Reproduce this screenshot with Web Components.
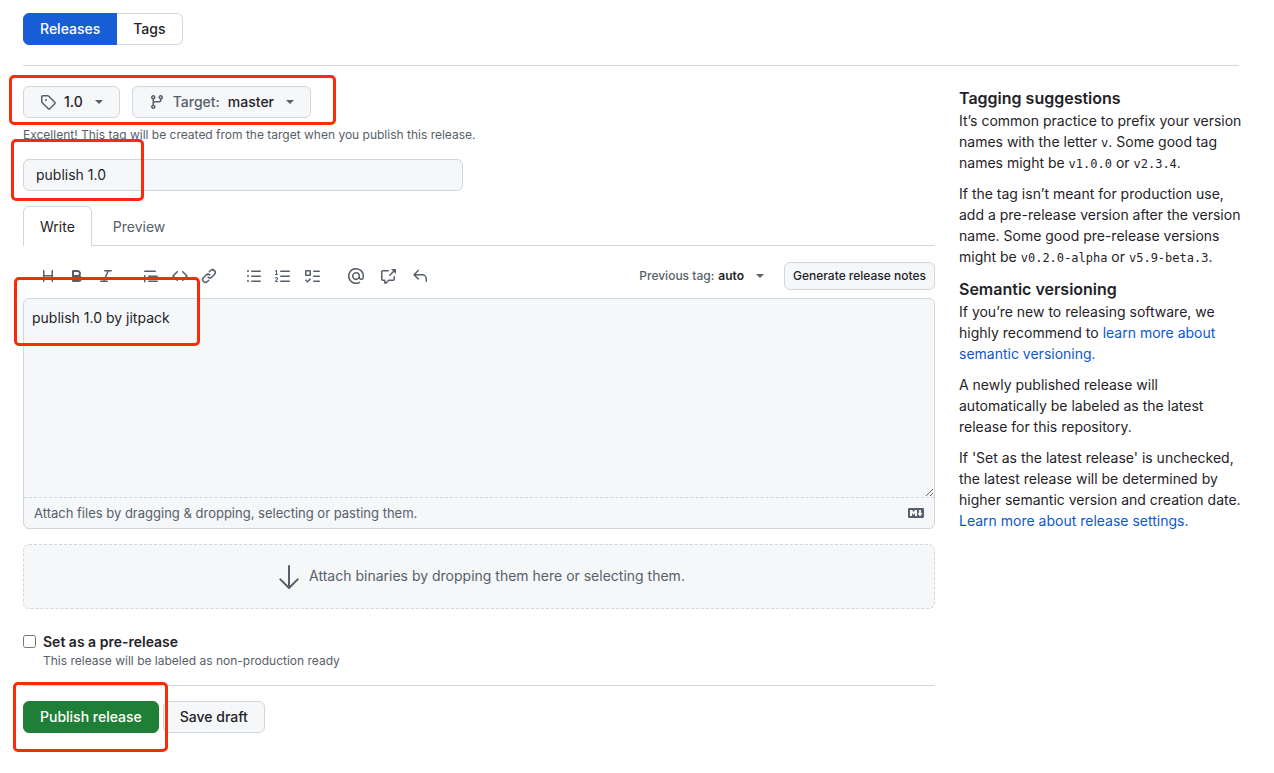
<!DOCTYPE html>
<html lang="en">
<head>
<meta charset="utf-8">
<meta name="viewport" content="width=device-width, initial-scale=1">
<title>New release</title>
<style>
  :root {
    --fg: #1f2328;
    --muted: #57606a;
    --line: #d0d7de;
    --subtle: #f5f7f9;
    --accent: #0b57d0;
    --primary: #175dd6;
    --success: #1f7f37;
    --mark: #fb2a0a;
  }
  body {
    margin: 0;
    background: #fff;
    color: var(--fg);
    font: 14px/21px Inter, "Liberation Sans", sans-serif;
  }
</style>
</head>
<body>
<release-page></release-page>

<script>
const ICONS = {
  tag: 'M1 7.775V2.75C1 1.784 1.784 1 2.75 1h5.025c.464 0 .91.184 1.238.513l6.25 6.25a1.75 1.75 0 0 1 0 2.474l-5.026 5.026a1.75 1.75 0 0 1-2.474 0l-6.25-6.25A1.752 1.752 0 0 1 1 7.775Zm1.5 0c0 .066.026.13.073.177l6.25 6.25a.25.25 0 0 0 .354 0l5.025-5.025a.25.25 0 0 0 0-.354l-6.25-6.25a.25.25 0 0 0-.177-.073H2.75a.25.25 0 0 0-.25.25ZM6 5a1 1 0 1 1 0 2 1 1 0 0 1 0-2Z',
  branch: 'M9.5 3.25a2.25 2.25 0 1 1 3 2.122V6A2.5 2.5 0 0 1 10 8.5H6a1 1 0 0 0-1 1v1.128a2.251 2.251 0 1 1-1.5 0V5.372a2.25 2.25 0 1 1 1.5 0v1.836A2.493 2.493 0 0 1 6 7h4a1 1 0 0 0 1-1v-.628A2.25 2.25 0 0 1 9.5 3.25Zm-6 0a.75.75 0 1 0 1.5 0 .75.75 0 0 0-1.5 0Zm8.25-.75a.75.75 0 1 0 0 1.5.75.75 0 0 0 0-1.5ZM4.25 12a.75.75 0 1 0 0 1.5.75.75 0 0 0 0-1.5Z',
  heading: 'M3.75 2a.75.75 0 0 1 .75.75V7h7V2.75a.75.75 0 0 1 1.5 0v10.5a.75.75 0 0 1-1.5 0V8.5h-7v4.75a.75.75 0 0 1-1.5 0V2.75A.75.75 0 0 1 3.75 2Z',
  bold: 'M4 2h4.5a3.501 3.501 0 0 1 2.852 5.53A3.499 3.499 0 0 1 9.5 14H4a1 1 0 0 1-1-1V3a1 1 0 0 1 1-1Zm1 7v3h4.5a1.5 1.5 0 0 0 0-3Zm3.5-2a1.5 1.5 0 0 0 0-3H5v3Z',
  italic: 'M6 2.75A.75.75 0 0 1 6.75 2h6.5a.75.75 0 0 1 0 1.5h-2.505l-3.858 9H9.25a.75.75 0 0 1 0 1.5h-6.5a.75.75 0 0 1 0-1.5h2.505l3.858-9H6.75A.75.75 0 0 1 6 2.75Z',
  quote: 'M1.75 2.5h10.5a.75.75 0 0 1 0 1.5H1.75a.75.75 0 0 1 0-1.5Zm4 5h8.5a.75.75 0 0 1 0 1.5h-8.5a.75.75 0 0 1 0-1.5Zm0 5h8.5a.75.75 0 0 1 0 1.5h-8.5a.75.75 0 0 1 0-1.5ZM2.5 7.75v6a.75.75 0 0 1-1.5 0v-6a.75.75 0 0 1 1.5 0Z',
  code: 'm11.28 3.22 4.25 4.25a.75.75 0 0 1 0 1.06l-4.25 4.25a.749.749 0 0 1-1.275-.326.749.749 0 0 1 .215-.734L13.94 8l-3.72-3.72a.749.749 0 0 1 .326-1.275.749.749 0 0 1 .734.215Zm-6.56 0a.751.751 0 0 1 1.042.018.751.751 0 0 1 .018 1.042L2.06 8l3.72 3.72a.749.749 0 0 1-.326 1.275.749.749 0 0 1-.734-.215L.47 8.53a.75.75 0 0 1 0-1.06Z',
  link: 'm7.775 3.275 1.25-1.25a3.5 3.5 0 1 1 4.95 4.95l-2.5 2.5a3.5 3.5 0 0 1-4.95 0 .751.751 0 0 1 .018-1.042.751.751 0 0 1 1.042-.018 1.998 1.998 0 0 0 2.83 0l2.5-2.5a2.002 2.002 0 0 0-2.83-2.83l-1.25 1.25a.751.751 0 0 1-1.042-.018.751.751 0 0 1-.018-1.042Zm-4.69 9.64a1.998 1.998 0 0 0 2.83 0l1.25-1.25a.751.751 0 0 1 1.042.018.751.751 0 0 1 .018 1.042l-1.25 1.25a3.5 3.5 0 1 1-4.95-4.95l2.5-2.5a3.5 3.5 0 0 1 4.95 0 .751.751 0 0 1-.018 1.042.751.751 0 0 1-1.042.018 1.998 1.998 0 0 0-2.83 0l-2.5 2.5a1.998 1.998 0 0 0 0 2.83Z',
  bullets: 'M5.75 2.5h8.5a.75.75 0 0 1 0 1.5h-8.5a.75.75 0 0 1 0-1.5Zm0 5h8.5a.75.75 0 0 1 0 1.5h-8.5a.75.75 0 0 1 0-1.5Zm0 5h8.5a.75.75 0 0 1 0 1.5h-8.5a.75.75 0 0 1 0-1.5ZM2 14a1 1 0 1 1 0-2 1 1 0 0 1 0 2Zm1-6a1 1 0 1 1-2 0 1 1 0 0 1 2 0ZM2 4a1 1 0 1 1 0-2 1 1 0 0 1 0 2Z',
  numbers: 'M5 3.25a.75.75 0 0 1 .75-.75h8.5a.75.75 0 0 1 0 1.5h-8.5A.75.75 0 0 1 5 3.25Zm0 5a.75.75 0 0 1 .75-.75h8.5a.75.75 0 0 1 0 1.5h-8.5A.75.75 0 0 1 5 8.25Zm0 5a.75.75 0 0 1 .75-.75h8.5a.75.75 0 0 1 0 1.5h-8.5a.75.75 0 0 1-.75-.75ZM.924 10.32a.5.5 0 0 1-.851-.525l.001-.001.001-.002.002-.004.007-.011c.097-.144.215-.273.348-.384.228-.19.588-.392 1.068-.392.468 0 .858.181 1.126.484.259.294.377.673.377 1.038 0 .987-.686 1.495-1.156 1.845l-.047.035c-.303.225-.522.4-.654.597h1.357a.5.5 0 0 1 0 1H.5a.5.5 0 0 1-.5-.5c0-1.005.692-1.52 1.167-1.875l.035-.025c.531-.396.8-.625.8-1.078a.57.57 0 0 0-.128-.376C1.806 10.068 1.695 10 1.5 10a.658.658 0 0 0-.429.163.835.835 0 0 0-.144.153ZM2.003 2.5V6h.503a.5.5 0 0 1 0 1H.5a.5.5 0 0 1 0-1h.503V3.308l-.28.14a.5.5 0 0 1-.446-.895l1.003-.5a.5.5 0 0 1 .723.447Z',
  tasks: 'M2 2h4a1 1 0 0 1 1 1v4a1 1 0 0 1-1 1H2a1 1 0 0 1-1-1V3a1 1 0 0 1 1-1Zm4.655 8.595a.75.75 0 0 1 0 1.06L4.03 14.28a.75.75 0 0 1-1.06 0l-1.5-1.5a.749.749 0 0 1 .326-1.275.749.749 0 0 1 .734.215l.97.97 2.095-2.095a.75.75 0 0 1 1.06 0ZM9.75 2.5h5.5a.75.75 0 0 1 0 1.5h-5.5a.75.75 0 0 1 0-1.5Zm0 5h5.5a.75.75 0 0 1 0 1.5h-5.5a.75.75 0 0 1 0-1.5Zm0 5h5.5a.75.75 0 0 1 0 1.5h-5.5a.75.75 0 0 1 0-1.5Zm-7.25-9v3h3v-3Z',
  mention: 'M4.75 2.37a6.501 6.501 0 0 0 6.5 11.26.75.75 0 0 1 .75 1.298A7.999 7.999 0 0 1 .989 4.148 8 8 0 0 1 16 7.75v1.5a2.75 2.75 0 0 1-5.072 1.475 3.999 3.999 0 0 1-6.65-4.19A4 4 0 0 1 12 8v1.25a1.25 1.25 0 0 0 2.5 0V7.867a6.5 6.5 0 0 0-9.75-5.496ZM10.5 8a2.5 2.5 0 1 0-5 0 2.5 2.5 0 0 0 5 0Z',
  reference: 'M2.75 3.5a.25.25 0 0 0-.25.25v7.5c0 .138.112.25.25.25h2a.75.75 0 0 1 .75.75v2.19l2.72-2.72a.749.749 0 0 1 .53-.22h4.5a.25.25 0 0 0 .25-.25v-2.5a.75.75 0 0 1 1.5 0v2.5A1.75 1.75 0 0 1 13.25 13H9.06l-2.573 2.573A1.458 1.458 0 0 1 4 14.543V13H2.75A1.75 1.75 0 0 1 1 11.25v-7.5C1 2.784 1.784 2 2.75 2h5.5a.75.75 0 0 1 0 1.5ZM16 1.25v4.146a.25.25 0 0 1-.427.177L14.03 4.03l-3.75 3.75a.749.749 0 0 1-1.275-.326.749.749 0 0 1 .215-.734l3.75-3.75-1.543-1.543A.25.25 0 0 1 11.604 1h4.146a.25.25 0 0 1 .25.25Z',
  reply: 'M6.78 1.97a.75.75 0 0 1 0 1.06L3.81 6h6.44A4.75 4.75 0 0 1 15 10.75v2.5a.75.75 0 0 1-1.5 0v-2.5a3.25 3.25 0 0 0-3.25-3.25H3.81l2.97 2.97a.749.749 0 0 1-.326 1.275.749.749 0 0 1-.734-.215L1.47 7.28a.75.75 0 0 1 0-1.06l4.25-4.25a.75.75 0 0 1 1.06 0Z',
  markdown: 'M14.85 3c.63 0 1.15.52 1.14 1.15v7.7c0 .63-.51 1.15-1.15 1.15H1.15C.52 13 0 12.48 0 11.84V4.15C0 3.52.52 3 1.15 3ZM9 11V5H7L5.5 7 4 5H2v6h2V8l1.5 1.92L7 8v3Zm2.99.5L14.5 8H13V5h-2v3H9.5Z',
  arrow: 'M4.97 13.22a.75.75 0 0 1 1.06 0L11.25 18.44V3.75a.75.75 0 0 1 1.5 0v14.69l5.22-5.22a.749.749 0 0 1 1.275.326.749.749 0 0 1-.215.734l-6.5 6.5a.75.75 0 0 1-1.06 0l-6.5-6.5a.75.75 0 0 1 0-1.06Z'
};

function define(name, render) {
  customElements.define(name, class extends HTMLElement {
    connectedCallback() {
      if (this.shadowRoot) return;
      const t = document.createElement('template');
      t.innerHTML = '<style>*{box-sizing:border-box}</style>' + render(this);
      this.attachShadow({ mode: 'open' }).append(t.content.cloneNode(true));
    }
  });
}

define('oct-icon', el => {
  const name = el.getAttribute('name');
  const big = name === 'arrow';
  return `
  <style>
    :host { display: inline-flex; flex: none; color: var(--muted); }
    svg { display: block; fill: currentColor; }
  </style>
  <svg width="${big ? 32 : 16}" height="${big ? 32 : 16}" viewBox="0 0 ${big ? '24 24' : '16 16'}" aria-hidden="true"><path d="${ICONS[name]}"/></svg>`;
});

/* Red frame laid over part of its host; the host sets where it lies. */
define('mark-frame', () => `
  <style>
    :host { position: absolute; z-index: 1; pointer-events: none; border: 3px solid var(--mark); border-radius: 5px; box-sizing: border-box; }
  </style>`);

define('ui-button', () => `
  <style>
    :host { display: inline-flex; flex: none; }
    button {
      display: flex; align-items: center; height: 32px; padding: 0 16px;
      border: 1px solid var(--line); border-radius: 6px;
      background: var(--subtle); color: var(--fg);
      font: 500 14px/20px Inter, "Liberation Sans", sans-serif; white-space: nowrap; cursor: pointer;
    }
    :host([kind=primary]) button { background: var(--success); border-color: var(--success); color: #fff; }
    :host([kind=small]) button { height: 28px; padding: 0 8px; font-size: 12px; }
    :host([kind=menu]) button { gap: 8px; }
    :host([kind=plain]) button { height: 28px; padding: 0; gap: 4px; border: 0; background: none; font-size: 12px; color: var(--muted); }
    :host([caret]) button::after {
      content: ""; margin-left: 4px; border: 4px solid transparent; border-top-color: var(--muted); border-bottom: 0;
    }
    :host([kind=plain]) button::after { margin-left: 8px; }
  </style>
  <button type="button"><slot></slot></button>`);

define('release-nav', () => `
  <style>
    :host { display: block; padding-bottom: 20px; border-bottom: 1px solid var(--line); }
    nav { display: flex; }
    a {
      display: flex; align-items: center; height: 32px; padding: 0 16px; border: 1px solid var(--line);
      color: var(--fg); text-decoration: none; font-weight: 500; line-height: 20px;
    }
    a:first-child { border-radius: 6px 0 0 6px; border-color: var(--primary); background: var(--primary); color: #fff; }
    a:last-child { border-left: 0; border-radius: 0 6px 6px 0; }
  </style>
  <nav aria-label="Releases and tags"><a href="#releases" aria-current="page">Releases</a><a href="#tags">Tags</a></nav>`);

define('target-picker', () => `
  <style>
    :host { display: block; position: relative; }
    .row { display: flex; gap: 12px; }
    .muted { color: var(--muted); }
    b { font-weight: 500; }
    p { margin: 8px 0 0; font-size: 12px; line-height: 18px; color: var(--muted); }
    mark-frame { left: -14px; top: -11px; width: 327px; height: 50px; }
  </style>
  <div class="row">
    <ui-button kind="menu" caret><oct-icon name="tag"></oct-icon><b>1.0</b></ui-button>
    <ui-button kind="menu" caret><oct-icon name="branch"></oct-icon><span class="muted">Target:</span><b>master</b></ui-button>
  </div>
  <p>Excellent! This tag will be created from the target when you publish this release.</p>
  <mark-frame></mark-frame>`);

define('title-field', () => `
  <style>
    :host { display: block; position: relative; margin-top: 15px; }
    input {
      display: block; width: 100%; max-width: 440px; height: 32px; padding: 0 12px 1px;
      border: 1px solid var(--line); border-radius: 6px; background: var(--subtle);
      color: var(--fg); font: inherit;
    }
    mark-frame { left: -12px; top: -20px; width: 133px; height: 62px; }
  </style>
  <input type="text" aria-label="Release title" value="publish 1.0">
  <mark-frame></mark-frame>`);

define('tool-group', el => `
  <style>
    :host { display: flex; }
    button { display: flex; justify-content: center; align-items: center; width: var(--tool, 29px); height: 28px; padding: 0; border: 0; background: none; cursor: pointer; }
  </style>
  ${el.getAttribute('tools').split(' ').map(t => `<button type="button" aria-label="${t}"><oct-icon name="${t}"></oct-icon></button>`).join('')}`);

define('notes-editor', () => `
  <style>
    :host { display: block; margin-top: 15px; }
    .tabs { display: flex; height: 40px; border-bottom: 1px solid var(--line); }
    .tabs button {
      height: 40px; padding: 0 16px; border: 1px solid transparent; border-bottom: 0; background: none;
      font: inherit; color: var(--muted); cursor: pointer; margin-right: 4px;
    }
    .tabs button[aria-selected=true] { border-color: var(--line); border-radius: 6px 6px 0 0; background: #fff; color: var(--fg); }
    .bar { display: flex; align-items: center; justify-content: space-between; padding: 16px 0 8px 10px; }
    .tools { display: flex; gap: 16px; }
    .tools .wide { --tool: 32px; margin-left: -2px; }
    .right { display: flex; align-items: center; gap: 20px; }
    .auto { color: var(--fg); font-weight: 600; }
    .field { position: relative; }
    .box { border: 1px solid var(--line); border-radius: 6px; background: var(--subtle); }
    textarea {
      display: block; width: 100%; height: 199px; padding: 8px; border: 0; border-bottom: 1px dashed var(--line);
      border-radius: 6px 6px 0 0; background: none; color: var(--fg); font: inherit; resize: vertical; outline: 0;
    }
    .foot { display: flex; align-items: center; justify-content: space-between; height: 30px; padding: 0 10px; color: var(--muted); font-size: 13px; }
    mark-frame { left: -9px; top: -21px; width: 186px; height: 69px; }
  </style>
  <div class="tabs" role="tablist">
    <button type="button" role="tab" aria-selected="true">Write</button>
    <button type="button" role="tab" aria-selected="false">Preview</button>
  </div>
  <div class="bar">
    <div class="tools">
      <tool-group tools="heading bold italic"></tool-group>
      <tool-group tools="quote code link"></tool-group>
      <tool-group tools="bullets numbers tasks"></tool-group>
      <tool-group class="wide" tools="mention reference reply"></tool-group>
    </div>
    <div class="right">
      <ui-button kind="plain" caret><span>Previous tag:</span><span class="auto">auto</span></ui-button>
      <ui-button kind="small">Generate release notes</ui-button>
    </div>
  </div>
  <div class="field">
    <div class="box">
      <textarea aria-label="Describe this release">publish 1.0 by jitpack</textarea>
      <div class="foot"><span>Attach files by dragging &amp; dropping, selecting or pasting them.</span><oct-icon name="markdown"></oct-icon></div>
    </div>
    <mark-frame></mark-frame>
  </div>`);

define('drop-zone', () => `
  <style>
    :host {
      display: flex; align-items: center; justify-content: center; gap: 4px; box-sizing: border-box;
      height: 65px; margin-top: 15px; border: 1px dashed var(--line); border-radius: 6px;
      background: var(--subtle); color: var(--muted);
    }
    span { padding-bottom: 3px; }
  </style>
  <oct-icon name="arrow"></oct-icon><span>Attach binaries by dropping them here or selecting them.</span>`);

define('release-form-end', () => `
  <style>
    :host { display: block; margin-top: 23px; }
    .option { display: flex; align-items: flex-start; gap: 7px; padding-bottom: 15px; border-bottom: 1px solid var(--line); }
    input { width: 13px; height: 13px; margin: 3px 0 0; }
    label { display: block; font-weight: 600; line-height: 20px; }
    p { margin: 0; font-size: 12px; line-height: 18px; color: var(--muted); }
    .actions { display: flex; gap: 4px; position: relative; margin-top: 15px; }
    mark-frame { left: -10px; top: -19px; width: 155px; height: 70px; }
  </style>
  <div class="option">
    <input type="checkbox" id="pre" aria-describedby="pre-note">
    <div><label for="pre">Set as a pre-release</label><p id="pre-note">This release will be labeled as non-production ready</p></div>
  </div>
  <div class="actions">
    <ui-button kind="primary">Publish release</ui-button>
    <ui-button>Save draft</ui-button>
    <mark-frame></mark-frame>
  </div>`);

define('release-help', () => `
  <style>
    :host { display: block; }
    h3 { margin: 0; font-size: 16px; line-height: 24px; font-weight: 600; }
    p { margin: 0 0 10px; }
    code { font: 12px/18px "DejaVu Sans Mono", monospace; }
    a { color: var(--accent); text-decoration: none; }
  </style>
  <h3>Tagging suggestions</h3>
  <p>It’s common practice to prefix your version names with the letter <code>v</code>. Some good tag names might be <code>v1.0.0</code> or <code>v2.3.4</code>.</p>
  <p>If the tag isn’t meant for production use, add a pre-release version after the version name. Some good pre-release versions might be <code>v0.2.0-alpha</code> or <code>v5.9-beta.3</code>.</p>
  <h3>Semantic versioning</h3>
  <p>If you’re new to releasing software, we highly recommend to <a href="#semver">learn more about semantic versioning.</a></p>
  <p>A newly published release will automatically be labeled as the latest release for this repository.</p>
  <p>If 'Set as the latest release' is unchecked, the latest release will be determined by higher semantic version and creation date. <a href="#settings">Learn more about release settings.</a></p>`);

define('release-page', () => `
  <style>
    :host { display: block; padding: 13px 35px 20px 23px; }
    .cols { display: grid; grid-template-columns: minmax(0, 1fr) 288px; gap: 24px; margin-right: -8px; padding-top: 20px; }
  </style>
  <release-nav></release-nav>
  <div class="cols">
    <main>
      <target-picker></target-picker>
      <title-field></title-field>
      <notes-editor></notes-editor>
      <drop-zone></drop-zone>
      <release-form-end></release-form-end>
    </main>
    <aside><release-help></release-help></aside>
  </div>`);
</script>
</body>
</html>
